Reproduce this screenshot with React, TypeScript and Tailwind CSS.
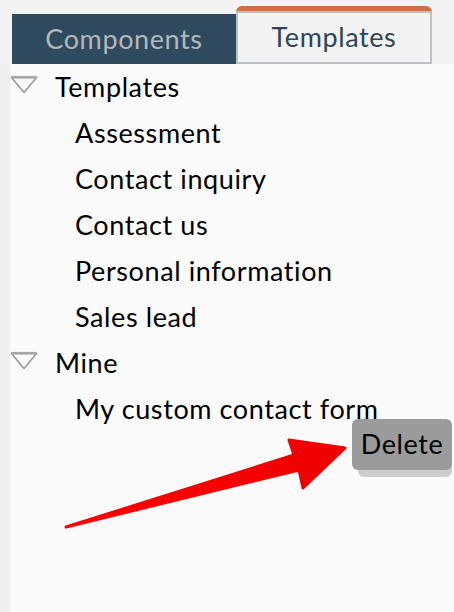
import React from "react";

const font = { fontFamily: "Lato, 'Open Sans', sans-serif" };

// ── Tree caret ──────────────────────────────────────────────────────────────

function Caret() {
  return (
    <svg width="28" height="20" viewBox="0 0 28 20" className="shrink-0">
      <path
        d="M1.5 2.5 L26.5 2.5 L14 17.5 Z"
        fill="none"
        stroke="#9a9a9a"
        strokeWidth="1.6"
        strokeLinejoin="round"
      />
      <line x1="1" y1="2.2" x2="27" y2="2.2" stroke="#a8a8a8" strokeWidth="2.6" />
    </svg>
  );
}

function GroupRow({ label }: { label: string }) {
  return (
    <div className="flex h-[46px] items-center">
      <div className="ml-[10px] w-[45px] -mt-[4px]">
        <Caret />
      </div>
      <span className="text-[27px] tracking-[0.6px] text-black">{label}</span>
    </div>
  );
}

function ItemRow({ label }: { label: string }) {
  return (
    <div className="flex h-[46px] items-center pl-[75px]">
      <span className="text-[27px] tracking-[0.6px] text-black">{label}</span>
    </div>
  );
}

// ── Red annotation arrow ────────────────────────────────────────────────────

function Arrow() {
  return (
    <svg width="454" height="612" viewBox="0 0 454 612" className="pointer-events-none absolute left-0 top-0">
      <defs>
        <linearGradient id="ar" x1="60" y1="530" x2="350" y2="450" gradientUnits="userSpaceOnUse">
          <stop offset="0" stopColor="#ff0000" />
          <stop offset="1" stopColor="#ee0000" />
        </linearGradient>
      </defs>
      <path
        d="M66 527 L294 455 L289 440 L345 448 L303 488 L299 470 Z"
        fill="url(#ar)"
        stroke="url(#ar)"
        strokeWidth="3"
        strokeLinejoin="round"
      />
    </svg>
  );
}

export default function App() {
  return (
    <div className="relative h-[612px] w-[454px] overflow-hidden bg-[#fafafa]" style={font}>
      {/* Tab header */}
      <div className="flex h-[64px] items-end bg-[#f3f3f3] pl-[12px]">
        <div className="flex h-[50px] w-[224px] items-center justify-center bg-[#2f4a5e] text-[27px] tracking-[0.6px] text-[#b3b8bc]">
          Components
        </div>
        <div className="h-[58px] w-[196px] rounded-t-[6px] bg-[#cc7046] pt-[5px]">
          <div className="flex h-full items-center justify-center border-2 border-[#bcc1c5] bg-[#f3f3f3] text-[27px] tracking-[0.6px] text-[#2f4558]">
            Templates
          </div>
        </div>
      </div>

      {/* Tree */}
      <div className="flex h-[548px]">
        <div className="w-[10px] bg-[#efefef]" />
        <div className="-ml-[10px] flex-1">
          <GroupRow label="Templates" />
          <ItemRow label="Assessment" />
          <ItemRow label="Contact inquiry" />
          <ItemRow label="Contact us" />
          <ItemRow label="Personal information" />
          <ItemRow label="Sales lead" />
          <GroupRow label="Mine" />
          <ItemRow label="My custom contact form" />
        </div>
      </div>

      {/* Context menu */}
      <div className="absolute left-[352px] top-[419px]">
        <div className="absolute left-[6px] top-[7px] h-[51px] w-[94px] rounded-[6px] bg-[#cdcdcd]" />
        <div className="relative flex h-[51px] w-[100px] items-center justify-center rounded-[6px] bg-[#9b9b9b] text-[27px] tracking-[0.6px] text-black">
          Delete
        </div>
      </div>

      <Arrow />
    </div>
  );
}
